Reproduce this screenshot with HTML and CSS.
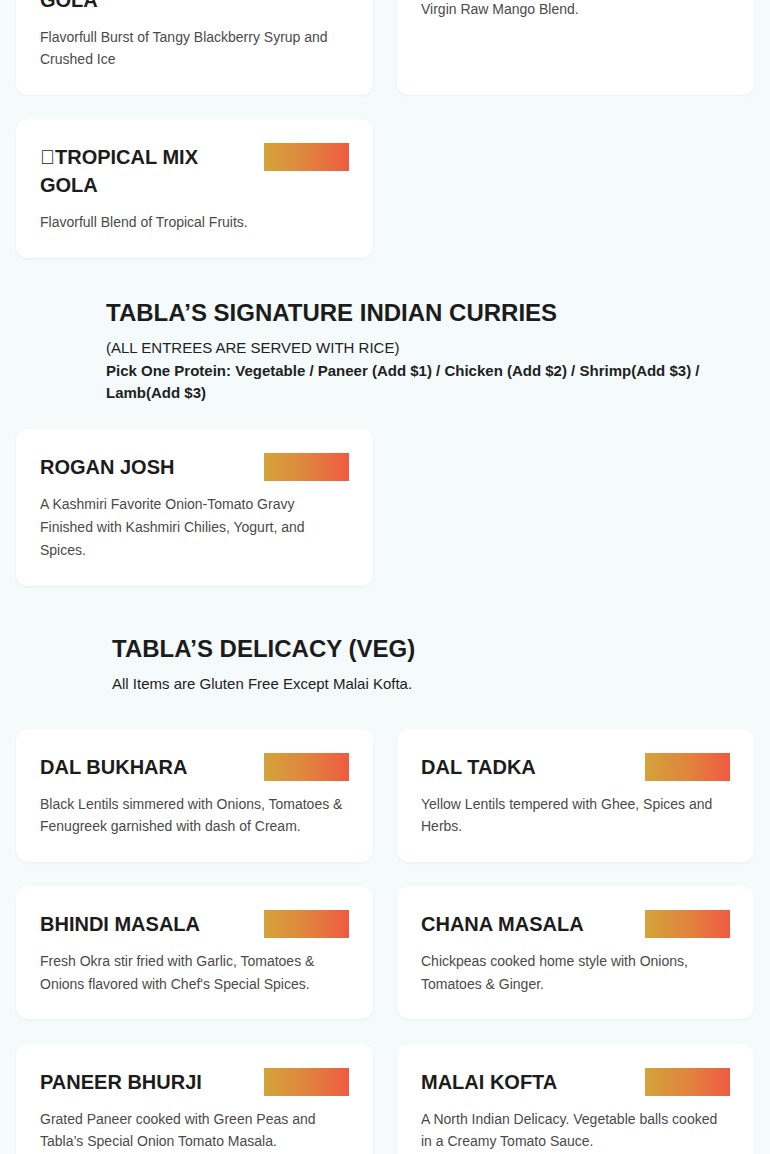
FILE: index.html
```html
<!DOCTYPE html>
<html lang="en">
<head>
<meta charset="utf-8">
<title>Tabla Menu</title>
<link rel="stylesheet" href="styles.css">
</head>
<body>
<main class="menu">
  <section class="grid grid-first">
    <article class="card">
      <div class="card-head">
        <h3 class="card-title">KALA KHATTA GOLA</h3>
        <span class="price-bar"></span>
      </div>
      <p class="card-desc">Flavorfull Burst of Tangy Blackberry Syrup and Crushed Ice</p>
    </article>
    <article class="card">
      <div class="card-head">
        <h3 class="card-title">MANGO GOLA</h3>
        <span class="price-bar"></span>
      </div>
      <p class="card-desc">Virgin Raw Mango Blend.</p>
    </article>
    <article class="card">
      <div class="card-head">
        <h3 class="card-title">&#xE000;TROPICAL MIX GOLA</h3>
        <span class="price-bar"></span>
      </div>
      <p class="card-desc">Flavorfull Blend of Tropical Fruits.</p>
    </article>
  </section>

  <header class="section-head section-head-curries">
    <h2 class="section-title">TABLA’S SIGNATURE INDIAN CURRIES</h2>
    <p class="section-sub">(ALL ENTREES ARE SERVED WITH RICE)</p>
    <p class="section-note">Pick One Protein: Vegetable / Paneer (Add $1) / Chicken (Add $2) / Shrimp(Add $3) / Lamb(Add $3)</p>
  </header>

  <section class="grid">
    <article class="card">
      <div class="card-head">
        <h3 class="card-title">ROGAN JOSH</h3>
        <span class="price-bar"></span>
      </div>
      <p class="card-desc card-desc-loose">A Kashmiri Favorite Onion-Tomato Gravy Finished with Kashmiri Chilies, Yogurt, and Spices.</p>
    </article>
  </section>

  <header class="section-head section-head-veg">
    <h2 class="section-title">TABLA’S DELICACY (VEG)</h2>
    <p class="section-sub">All Items are Gluten Free Except Malai Kofta.</p>
  </header>

  <section class="grid">
    <article class="card">
      <div class="card-head">
        <h3 class="card-title">DAL BUKHARA</h3>
        <span class="price-bar"></span>
      </div>
      <p class="card-desc">Black Lentils simmered with Onions, Tomatoes &amp; Fenugreek garnished with dash of Cream.</p>
    </article>
    <article class="card">
      <div class="card-head">
        <h3 class="card-title">DAL TADKA</h3>
        <span class="price-bar"></span>
      </div>
      <p class="card-desc">Yellow Lentils tempered with Ghee, Spices and Herbs.</p>
    </article>
    <article class="card">
      <div class="card-head">
        <h3 class="card-title">BHINDI MASALA</h3>
        <span class="price-bar"></span>
      </div>
      <p class="card-desc">Fresh Okra stir fried with Garlic, Tomatoes &amp; Onions flavored with Chef's Special Spices.</p>
    </article>
    <article class="card">
      <div class="card-head">
        <h3 class="card-title">CHANA MASALA</h3>
        <span class="price-bar"></span>
      </div>
      <p class="card-desc">Chickpeas cooked home style with Onions, Tomatoes &amp; Ginger.</p>
    </article>
    <article class="card">
      <div class="card-head">
        <h3 class="card-title">PANEER BHURJI</h3>
        <span class="price-bar"></span>
      </div>
      <p class="card-desc">Grated Paneer cooked with Green Peas and Tabla’s Special Onion Tomato Masala.</p>
    </article>
    <article class="card">
      <div class="card-head">
        <h3 class="card-title">MALAI KOFTA</h3>
        <span class="price-bar"></span>
      </div>
      <p class="card-desc">A North Indian Delicacy. Vegetable balls cooked in a Creamy Tomato Sauce.</p>
    </article>
  </section>
</main>
</body>
</html>
```

FILE: styles.css
```css
* { box-sizing: border-box; }

html, body {
  margin: 0;
  padding: 0;
  background: #f5fafb;
  font-family: "Liberation Sans", Arial, sans-serif;
  color: #1c1c1c;
}

.menu {
  padding: 0 16px;
  margin-top: -66.5px;
}

.grid {
  display: grid;
  grid-template-columns: 1fr 1fr;
  column-gap: 24px;
  row-gap: 24.5px;
}

.card {
  background: #ffffff;
  border-radius: 12px;
  box-shadow: 0 1px 3px rgba(20, 40, 50, 0.05);
  padding: 24px;
}

.card-head {
  display: flex;
  align-items: flex-start;
  justify-content: space-between;
  gap: 24px;
}

.card-title {
  margin: 0;
  font-size: 20px;
  line-height: 28px;
  font-weight: 700;
  color: #1c1c1c;
  max-width: 200px;
}

.price-bar {
  flex: 0 0 85px;
  height: 28px;
  background: linear-gradient(90deg, #d4a33a 0%, #e0853e 50%, #ef5a41 100%);
}

.card-desc {
  margin: 12px 0 0;
  font-size: 14px;
  line-height: 22.5px;
  color: #4a4a4a;
}

.card-desc-loose {
  line-height: 23px;
}

.section-head {
  padding-right: 16px;
}

.section-head-curries {
  padding-left: 90px;
  margin: 41.5px 0 24.5px;
}

.section-head-veg {
  padding-left: 96px;
  margin: 48.5px 0 33.5px;
}

.section-title {
  margin: 0 0 9.4px;
  font-size: 24px;
  line-height: 28.8px;
  font-weight: 700;
  color: #1c1c1c;
}

.section-sub {
  margin: 0;
  font-size: 15px;
  line-height: 22.5px;
  color: #222;
}

.section-note {
  margin: 0;
  font-size: 15px;
  line-height: 22.5px;
  font-weight: 700;
  color: #222;
}
```
